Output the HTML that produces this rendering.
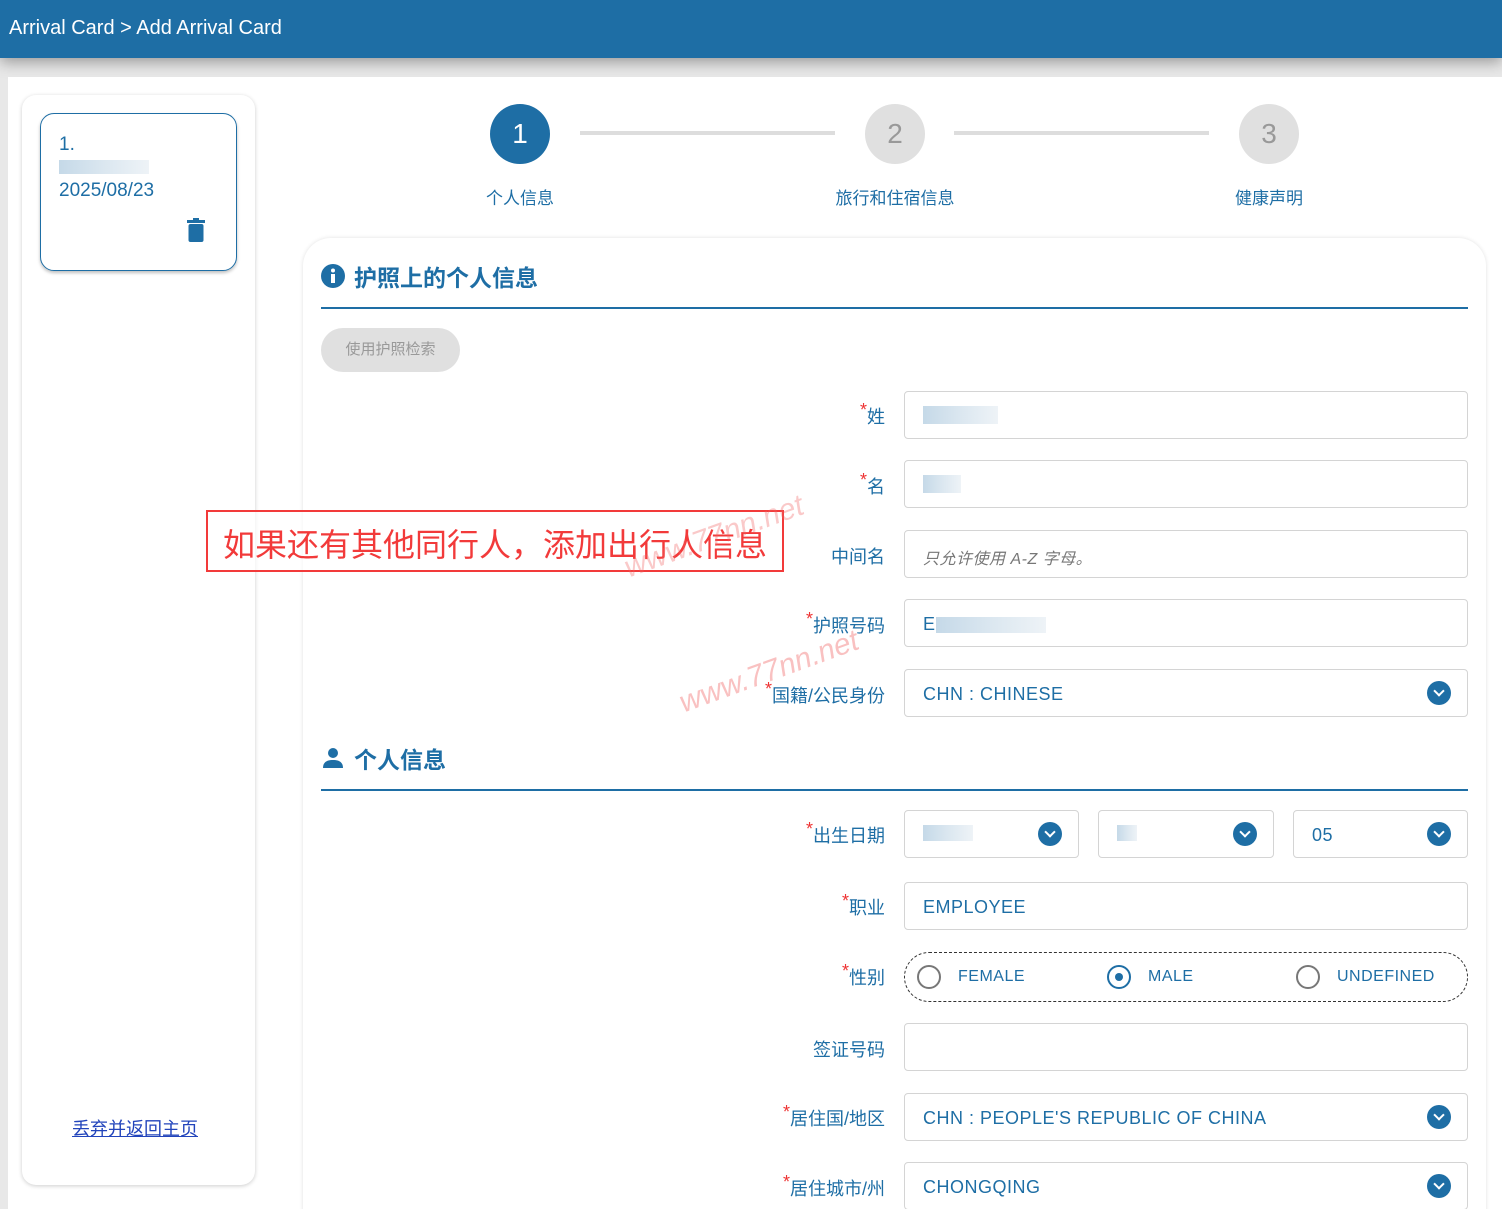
<!DOCTYPE html>
<html style="width:1502px;height:1209px;overflow:hidden"><head><meta charset="utf-8"><style>
*{box-sizing:border-box;margin:0;padding:0}
body{width:1502px;height:1209px;overflow:hidden;background:#e8e8e8;font-family:"Liberation Sans","Noto Sans CJK SC",sans-serif;color:#1e6ea5;position:relative}
.hdr{position:absolute;left:0;top:0;width:1502px;height:58px;background:#1e6ea5;color:#fff;font-size:20px;padding:17px 9px;box-shadow:0 4px 14px rgba(0,0,0,.35)}
.main{position:absolute;left:8px;top:77px;width:1494px;height:1140px;background:#fff}
.lp{position:absolute;left:22px;top:95px;width:233px;height:1090px;border-radius:14px;box-shadow:0 1px 4px rgba(0,0,0,.2);background:#fff}
.card{position:absolute;left:40px;top:113px;width:197px;height:158px;border:1.5px solid #1e6ea5;border-radius:14px;box-shadow:0 2px 3px rgba(0,0,0,.25);padding:20px 18px;font-size:19px}
.blur{width:90px;height:14px;background:linear-gradient(90deg,#c5d9e8,#dbe7f0,#eef3f7);margin:4px 0 6px}
.abs{position:absolute}
.step{position:absolute;width:60px;height:60px;border-radius:50%;font-size:28px;text-align:center;line-height:60px}
.line{position:absolute;top:131px;height:4px;background:#ddd}
.sl{position:absolute;top:184px;font-size:17px;text-align:center;width:200px}
.form{position:absolute;left:303px;top:238px;width:1183px;height:1000px;border-radius:28px;box-shadow:0 0 4px rgba(0,0,0,.12);background:#fff}
.sec{position:absolute;left:321px;font-size:23px;font-weight:bold;display:flex;align-items:center;gap:9px}
.hr{position:absolute;left:321px;width:1147px;height:1.5px;background:#1e6ea5}
.lab{position:absolute;right:617px;font-size:18px;text-align:right}
.lab i{color:#e33;font-style:normal;position:relative;top:-7px;font-size:18px}
.in{position:absolute;left:904px;width:564px;height:48px;border:1px solid #d4d4d4;border-radius:4px;font-size:18px;padding:14px 18px;letter-spacing:.5px}
.chev{position:absolute;right:16px;top:11px;width:24px;height:24px;border-radius:50%;background:#1e6ea5}
.chev:after{content:"";position:absolute;left:8px;top:6px;width:6px;height:6px;border-right:2.5px solid #fff;border-bottom:2.5px solid #fff;transform:rotate(45deg)}
.radio{position:absolute;width:24px;height:24px;border-radius:50%;border:2px solid #777}
</style></head><body>
<div class="hdr">Arrival Card &gt; Add Arrival Card</div>
<div class="main"></div>
<div class="lp"></div>
<div class="card">1.<div class="blur"></div>2025/08/23
<svg class="abs" style="left:146px;top:104px" width="18" height="24" viewBox="0 0 18 24"><rect x="0" y="2" width="18" height="3" fill="#1e6ea5"/><rect x="6" y="0" width="6" height="3" fill="#1e6ea5"/><rect x="1.5" y="6" width="15" height="18" rx="2" fill="#1e6ea5"/></svg></div>
<div class="abs" style="left:72px;top:1115px;font-size:18px;text-decoration:underline;color:#2244bb">丢弃并返回主页</div>

<div class="step" style="left:490px;top:104px;background:#1e6ea5;color:#fff">1</div>
<div class="step" style="left:865px;top:104px;background:#e0e0e0;color:#999">2</div>
<div class="step" style="left:1239px;top:104px;background:#e0e0e0;color:#999">3</div>
<div class="line" style="left:580px;width:255px"></div>
<div class="line" style="left:954px;width:255px"></div>
<div class="sl" style="left:420px">个人信息</div>
<div class="sl" style="left:795px">旅行和住宿信息</div>
<div class="sl" style="left:1169px">健康声明</div>

<div class="form"></div>
<div class="sec" style="top:259px"><svg width="24" height="24" viewBox="0 0 24 24"><circle cx="12" cy="12" r="12" fill="#1e6ea5"/><circle cx="12" cy="6.5" r="2" fill="#fff"/><rect x="10" y="10" width="4" height="9" fill="#fff"/></svg>护照上的个人信息</div>
<div class="hr" style="top:307px"></div>
<div class="abs" style="left:321px;top:328px;width:139px;height:44px;border-radius:22px;background:#e0e0e0;color:#999;font-size:15px;text-align:center;line-height:44px">使用护照检索</div>

<div class="lab" style="top:403px"><i>*</i>姓</div>
<div class="in" style="top:391px"><div class="blur" style="margin:0;width:75px;height:18px"></div></div>
<div class="lab" style="top:473px"><i>*</i>名</div>
<div class="in" style="top:460px"><div class="blur" style="margin:0;width:38px;height:18px"></div></div>
<div class="lab" style="top:543px">中间名</div>
<div class="in" style="top:530px;color:#777;font-style:italic;font-size:16px">只允许使用 A-Z 字母。</div>
<div class="lab" style="top:612px"><i>*</i>护照号码</div>
<div class="in" style="top:599px">E<span class="blur" style="display:inline-block;margin:0;width:110px;height:16px;vertical-align:middle"></span></div>
<div class="lab" style="top:682px"><i>*</i>国籍/公民身份</div>
<div class="in" style="top:669px">CHN : CHINESE<div class="chev"></div></div>

<div class="sec" style="top:741px"><svg width="24" height="24" viewBox="0 0 24 24"><circle cx="12" cy="7" r="5" fill="#1e6ea5"/><path d="M2 22c0-6 4-8 10-8s10 2 10 8z" fill="#1e6ea5"/></svg>个人信息</div>
<div class="hr" style="top:789px"></div>

<div class="lab" style="top:822px"><i>*</i>出生日期</div>
<div class="in" style="top:810px;width:175px"><div class="blur" style="margin:0;width:50px;height:16px"></div><div class="chev"></div></div>
<div class="in" style="top:810px;left:1098px;width:176px"><div class="blur" style="margin:0;width:20px;height:16px"></div><div class="chev"></div></div>
<div class="in" style="top:810px;left:1293px;width:175px">05<div class="chev"></div></div>
<div class="lab" style="top:894px"><i>*</i>职业</div>
<div class="in" style="top:882px">EMPLOYEE</div>
<div class="lab" style="top:964px"><i>*</i>性别</div>
<div class="in" style="top:952px;height:50px;border:1.3px dashed #333;border-radius:25px;font-size:16px">
<div class="radio" style="left:12px;top:12px"></div><span class="abs" style="left:53px;top:15px">FEMALE</span>
<div class="radio" style="left:202px;top:12px;border-color:#1e6ea5"><div style="position:absolute;left:6px;top:6px;width:8px;height:8px;border-radius:50%;background:#1e6ea5"></div></div><span class="abs" style="left:243px;top:15px">MALE</span>
<div class="radio" style="left:391px;top:12px"></div><span class="abs" style="left:432px;top:15px">UNDEFINED</span></div>
<div class="lab" style="top:1036px">签证号码</div>
<div class="in" style="top:1023px"></div>
<div class="lab" style="top:1105px"><i>*</i>居住国/地区</div>
<div class="in" style="top:1093px">CHN : PEOPLE'S REPUBLIC OF CHINA<div class="chev"></div></div>
<div class="lab" style="top:1175px"><i>*</i>居住城市/州</div>
<div class="in" style="top:1162px">CHONGQING<div class="chev"></div></div>

<div class="abs" style="left:206px;top:510px;width:578px;height:62px;border:2.5px solid #f23a3a;background:rgba(255,255,255,.6)"></div>
<div class="abs" style="left:223px;top:520px;font-size:32px;color:#f23a3a">如果还有其他同行人，添加出行人信息</div>
<div class="abs" style="left:620px;top:520px;font-size:30px;color:rgba(240,100,100,.35);font-style:italic;transform:rotate(-20deg)">www.77nn.net</div>
<div class="abs" style="left:675px;top:655px;font-size:30px;color:rgba(240,100,100,.4);font-style:italic;transform:rotate(-20deg)">www.77nn.net</div>
</body></html>
